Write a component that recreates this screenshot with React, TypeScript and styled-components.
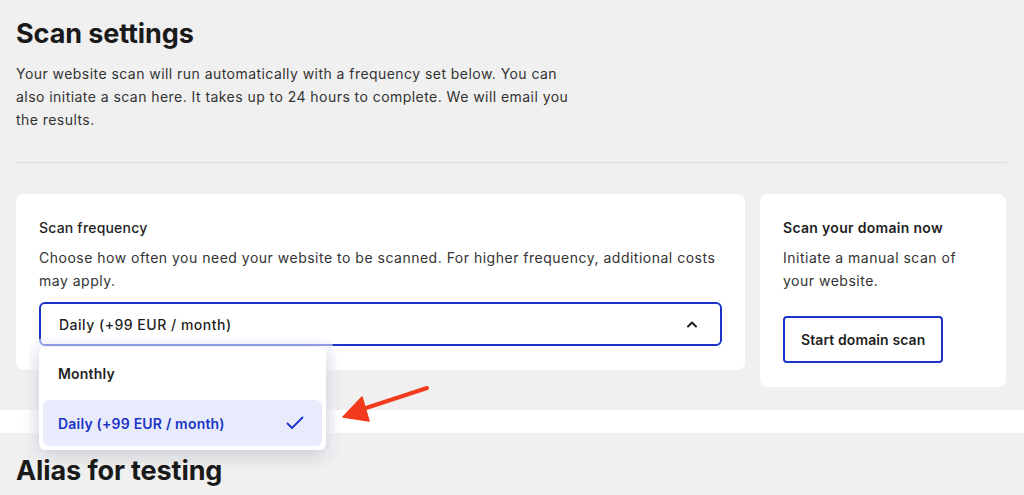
import React from 'react';
import styled, { createGlobalStyle } from 'styled-components';

const GlobalStyle = createGlobalStyle`
  html, body {
    margin: 0;
    padding: 0;
    background: #f0f0f0;
    font-family: Inter, "Noto Sans", "Liberation Sans", sans-serif;
    color: #1f1f1f;
  }
  * { box-sizing: border-box; }
`;

const BLUE = '#1b33c7';

const Page = styled.div`
  position: relative;
  height: 495px;
  overflow: hidden;
`;

const Section = styled.section`
  padding: 18px 18px 0 16px;
`;

const Title = styled.h1`
  margin: 0;
  font-size: 27px;
  line-height: 31px;
  font-weight: 700;
  color: #1a1a1a;
  letter-spacing: -0.1px;
`;

const Intro = styled.p`
  margin: 13px 0 0;
  max-width: 566px;
  font-size: 14px;
  line-height: 23px;
  letter-spacing: 0.45px;
  color: #333;
`;

const Divider = styled.hr`
  margin: 31px 0 31px;
  border: 0;
  border-top: 1px solid #dcdcdc;
`;

const Cards = styled.div`
  display: flex;
  align-items: flex-start;
  gap: 15px;
`;

const Card = styled.div<{ $width: number }>`
  width: ${(p) => p.$width}px;
  background: #fff;
  border-radius: 8px;
  padding: 24px 23px 24px 23px;
  display: flex;
  flex-direction: column;
`;

const CardTitle = styled.div<{ $strong?: boolean }>`
  font-size: 14px;
  line-height: 20px;
  font-weight: ${(p) => (p.$strong ? 600 : 500)};
  letter-spacing: ${(p) => (p.$strong ? 0.3 : 0.2)}px;
  color: #1f1f1f;
`;

const CardText = styled.div`
  margin-top: 8px;
  font-size: 14px;
  line-height: 23px;
  letter-spacing: 0.5px;
  color: #333;
`;

const SelectWrap = styled.div`
  position: relative;
  margin-top: 10px;
`;

const SelectBox = styled.div`
  height: 44px;
  border: 2px solid ${BLUE};
  border-radius: 6px;
  display: flex;
  align-items: center;
  justify-content: space-between;
  padding: 0 22px 0 18px;
  font-size: 14px;
  font-weight: 500;
  letter-spacing: 0.5px;
  color: #1f1f1f;
`;

const Menu = styled.div`
  position: absolute;
  top: 45px;
  left: 0;
  width: 287px;
  background: #fff;
  border-radius: 6px;
  padding: 4px;
  box-shadow: 0 6px 18px rgba(0, 0, 0, 0.16), 0 0 0 9px rgba(244, 246, 255, 0.55);
  z-index: 5;
`;

const MenuItem = styled.div<{ $active?: boolean }>`
  height: ${(p) => (p.$active ? 46 : 44)}px;
  margin-top: ${(p) => (p.$active ? 5 : 0)}px;
  display: flex;
  align-items: center;
  justify-content: space-between;
  padding: 0 18px 0 15px;
  border-radius: 6px;
  font-size: 14px;
  font-weight: 600;
  letter-spacing: 0.2px;
  color: ${(p) => (p.$active ? BLUE : '#1f1f1f')};
  background: ${(p) => (p.$active ? '#e8ebfb' : 'transparent')};
`;

const Button = styled.button`
  margin-top: 24px;
  align-self: flex-start;
  height: 47px;
  padding: 0 16px;
  background: #fff;
  border: 2px solid ${BLUE};
  border-radius: 4px;
  font-family: inherit;
  font-size: 14px;
  font-weight: 600;
  letter-spacing: 0.1px;
  color: #1f1f1f;
`;

const Band = styled.div`
  margin-top: 23px;
  height: 23px;
  background: #fff;
`;

const NextTitle = styled(Title)`
  padding: 22px 16px 0;
`;

const Arrow = styled.svg`
  position: absolute;
  left: 336px;
  top: 380px;
  z-index: 6;
`;

export default function App() {
  return (
    <Page>
      <GlobalStyle />
      <Section>
        <Title>Scan settings</Title>
        <Intro>
          Your website scan will run automatically with a frequency set below. You can also
          initiate a scan here. It takes up to 24 hours to complete. We will email you the
          results.
        </Intro>
        <Divider />
        <Cards>
          <Card $width={729}>
            <CardTitle>Scan frequency</CardTitle>
            <CardText>
              Choose how often you need your website to be scanned. For higher frequency,
              additional costs may apply.
            </CardText>
            <SelectWrap>
              <SelectBox>
                <span>Daily (+99 EUR / month)</span>
                <svg width="12" height="8" viewBox="0 0 12 8" fill="none">
                  <path d="M2 6.5 6 2.5l4 4" stroke="#1f1f1f" strokeWidth="2" strokeLinecap="round" strokeLinejoin="round" />
                </svg>
              </SelectBox>
              <Menu>
                <MenuItem>Monthly</MenuItem>
                <MenuItem $active>
                  <span>Daily (+99 EUR / month)</span>
                  <svg width="18" height="14" viewBox="0 0 18 14" fill="none">
                    <path d="M1.5 7.5 6 12 16.5 1.5" stroke={BLUE} strokeWidth="1.8" strokeLinecap="round" strokeLinejoin="round" />
                  </svg>
                </MenuItem>
              </Menu>
            </SelectWrap>
          </Card>
          <Card $width={246}>
            <CardTitle $strong>Scan your domain now</CardTitle>
            <CardText>Initiate a manual scan of your website.</CardText>
            <Button>Start domain scan</Button>
          </Card>
        </Cards>
      </Section>
      <Band />
      <NextTitle>Alias for testing</NextTitle>
      <Arrow width="100" height="50" viewBox="336 380 100 50">
        <path d="M427 388 L360 410" stroke="#f23b1e" strokeWidth="4" strokeLinecap="round" />
        <path d="M343 417 L362 397 L369 421 Z" fill="#f23b1e" stroke="#f23b1e" strokeWidth="1.5" strokeLinejoin="round" />
      </Arrow>
    </Page>
  );
}
